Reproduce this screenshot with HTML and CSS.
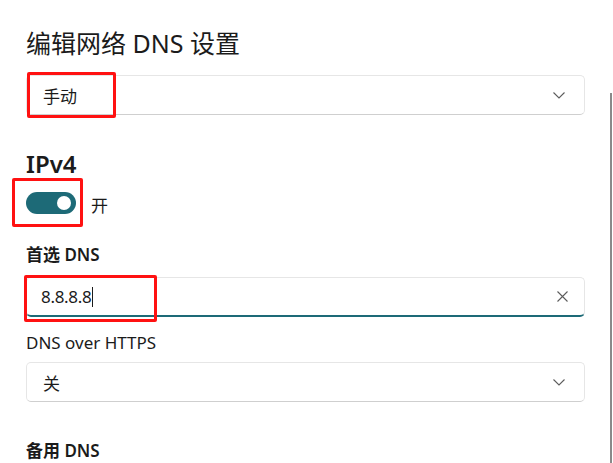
FILE: index.html
```html
<!DOCTYPE html>
<html>

<head>
  <title>编辑网络 DNS 设置</title>
  <link rel="stylesheet" href="styles.css">
</head>

<body>
  <div class="page">
    <h1 class="title">编辑网络 DNS 设置</h1>

    <div class="select first">
      <span>手动</span>
      <svg class="chevron" width="12" height="7" viewBox="0 0 12 7"><path d="M0.5 0.5 L6 6 L11.5 0.5" fill="none" stroke="#5c5c5c" stroke-width="1.1"/></svg>
      <div class="mark mark-select"></div>
    </div>

    <h2 class="section">IPv4</h2>
    <div class="toggle-row">
      <div class="toggle"><div class="knob"></div></div>
      <span class="toggle-text">开</span>
      <div class="mark mark-toggle"></div>
    </div>

    <div class="label strong">首选 DNS</div>
    <div class="input">
      <span class="value">8.8.8.8</span><span class="caret"></span>
      <svg class="clear" width="11" height="11" viewBox="0 0 11 11"><path d="M0.5 0.5 L10.5 10.5 M10.5 0.5 L0.5 10.5" fill="none" stroke="#5c5c5c" stroke-width="1.1"/></svg>
      <div class="mark mark-input"></div>
    </div>

    <div class="label">DNS over HTTPS</div>
    <div class="select">
      <span>关</span>
      <svg class="chevron" width="12" height="7" viewBox="0 0 12 7"><path d="M0.5 0.5 L6 6 L11.5 0.5" fill="none" stroke="#5c5c5c" stroke-width="1.1"/></svg>
    </div>

    <div class="label strong spare">备用 DNS</div>
  </div>
  <div class="scrollbar"></div>
</body>

</html>
```

FILE: styles.css
```css
body {
  margin: 0;
  background: #ffffff;
  color: #1b1b1b;
  font-family: "Noto Sans", "Noto Sans CJK SC", sans-serif;
  overflow: hidden;
}
.page {
  width: 559px;
  padding: 27px 0 0 26px;
}
.title {
  margin: 0;
  font-size: 25px;
  font-weight: 400;
  line-height: 32px;
  height: 32px;
}
.select,
.input {
  position: relative;
  box-sizing: border-box;
  height: 40px;
  display: flex;
  align-items: center;
  padding: 0 16px;
  border: 1px solid #e6e6e6;
  border-bottom-color: #cfcfcf;
  border-radius: 5px;
  font-size: 17px;
}
.select.first {
  margin-top: 16px;
}
.select span {
  flex: 1;
}
.chevron {
  margin-right: 3px;
}
.section {
  margin: 33px 0 0 0;
  font-size: 24px;
  font-weight: 600;
  line-height: 32px;
}
.toggle-row {
  position: relative;
  display: flex;
  align-items: center;
  margin-top: 12px;
  height: 22px;
}
.toggle {
  box-sizing: border-box;
  width: 50px;
  height: 22px;
  border-radius: 11px;
  background: #1d6a77;
  display: flex;
  align-items: center;
  justify-content: flex-end;
  padding-right: 5px;
}
.knob {
  width: 14px;
  height: 14px;
  border-radius: 50%;
  background: #ffffff;
}
.toggle-text {
  margin-left: 15px;
  font-size: 17px;
  padding-top: 3px;
}
.label {
  font-size: 17px;
  line-height: 24px;
  margin-top: 14px;
  margin-bottom: 7px;
}
.label.strong {
  font-weight: 600;
  margin-top: 29px;
  margin-bottom: 10px;
}
.label.spare {
  margin-top: 37px;
}
.input {
  padding-left: 14px;
  border-bottom: 2px solid #1d6a77;
  margin-bottom: 12px;
}
.value {
  letter-spacing: -0.3px;
}
.caret {
  display: inline-block;
  width: 1px;
  height: 20px;
  margin-left: 1px;
  background: #1b1b1b;
}
.clear {
  margin-left: auto;
  margin-right: 0;
}
/* red annotation boxes drawn over the controls */
.mark {
  position: absolute;
  box-sizing: border-box;
  border: 3px solid #ff1111;
  border-radius: 2px;
}
.mark-select {
  left: 0;
  top: -4px;
  width: 89px;
  height: 46px;
}
.mark-toggle {
  left: -14px;
  top: -14px;
  width: 71px;
  height: 49px;
}
.mark-input {
  left: -3px;
  top: -3px;
  width: 133px;
  height: 47px;
}
.scrollbar {
  position: absolute;
  left: 610px;
  top: 93px;
  width: 2px;
  height: 370px;
  background: #8a8a8a;
}
```
